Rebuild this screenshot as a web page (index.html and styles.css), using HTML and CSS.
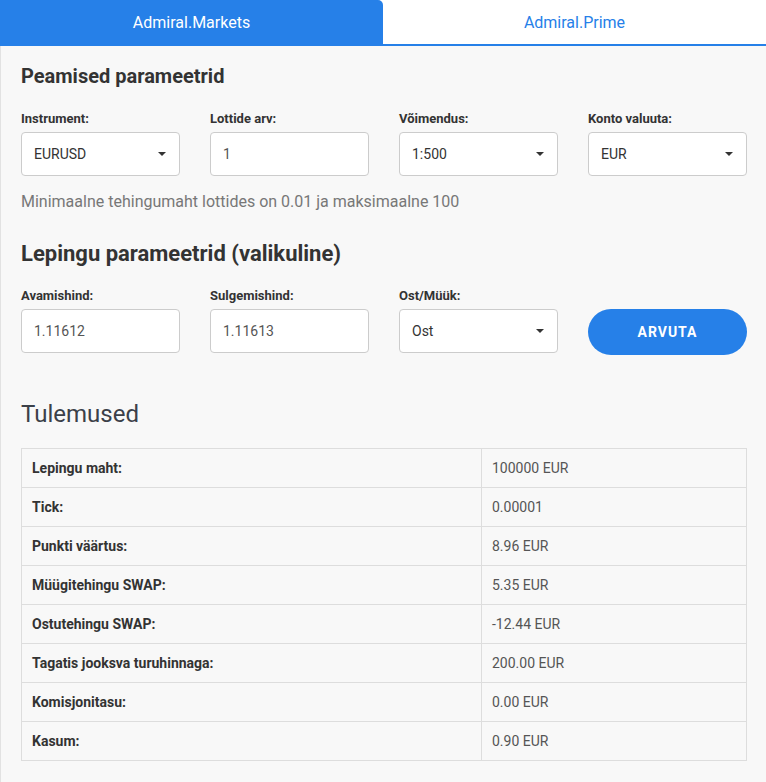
FILE: index.html
```html
<!DOCTYPE html>
<html lang="et">
<head>
    <meta charset="UTF-8">
    <meta name="viewport" content="width=device-width, initial-scale=1.0">
    <title>Kauplemiskalkulaator</title>
    <link rel="stylesheet" href="styles.css">
</head>
<body>
    <div class="tabs">
        <div class="tab active">Admiral.Markets</div>
        <div class="tab">Admiral.Prime</div>
    </div>

    <div class="panel">
        <h2 class="section-title">Peamised parameetrid</h2>
        <div class="row">
            <div class="field">
                <label>Instrument:</label>
                <div class="select-wrap">
                    <select><option>EURUSD</option></select>
                </div>
            </div>
            <div class="field">
                <label>Lottide arv:</label>
                <input type="text" value="1">
            </div>
            <div class="field">
                <label>Võimendus:</label>
                <div class="select-wrap">
                    <select><option>1:500</option></select>
                </div>
            </div>
            <div class="field">
                <label>Konto valuuta:</label>
                <div class="select-wrap">
                    <select><option>EUR</option></select>
                </div>
            </div>
        </div>
        <p class="hint">Minimaalne tehingumaht lottides on 0.01 ja maksimaalne 100</p>

        <h2 class="section-title second">Lepingu parameetrid (valikuline)</h2>
        <div class="row">
            <div class="field">
                <label>Avamishind:</label>
                <input type="text" value="1.11612">
            </div>
            <div class="field">
                <label>Sulgemishind:</label>
                <input type="text" value="1.11613">
            </div>
            <div class="field">
                <label>Ost/Müük:</label>
                <div class="select-wrap">
                    <select><option>Ost</option><option>Müük</option></select>
                </div>
            </div>
            <div class="field button-field">
                <button class="calc-btn">ARVUTA</button>
            </div>
        </div>

        <h3 class="results-title">Tulemused</h3>
        <table class="results">
            <tr><th>Lepingu maht:</th><td>100000 EUR</td></tr>
            <tr><th>Tick:</th><td>0.00001</td></tr>
            <tr><th>Punkti väärtus:</th><td>8.96 EUR</td></tr>
            <tr><th>Müügitehingu SWAP:</th><td>5.35 EUR</td></tr>
            <tr><th>Ostutehingu SWAP:</th><td>-12.44 EUR</td></tr>
            <tr><th>Tagatis jooksva turuhinnaga:</th><td>200.00 EUR</td></tr>
            <tr><th>Komisjonitasu:</th><td>0.00 EUR</td></tr>
            <tr><th>Kasum:</th><td>0.90 EUR</td></tr>
        </table>
    </div>
</body>
</html>
```

FILE: styles.css
```css
body {
    margin: 0;
    font-family: Roboto, Arial, sans-serif;
    color: #333;
    background: #fff;
}

.tabs {
    display: flex;
    height: 44px;
    border-bottom: 2px solid #2680e8;
}

.tab {
    flex: 1;
    display: flex;
    align-items: center;
    justify-content: center;
    font-size: 16px;
    color: #2680e8;
}

.tab.active {
    flex: 0 0 383px;
    background-color: #2680e8;
    color: #fff;
    border-top-right-radius: 5px;
}

.panel {
    background-color: #f8f8f8;
    border-left: 1px solid #e2e2e2;
    padding: 18px 19px 22px 20px;
}

.section-title {
    margin: 0;
    font-size: 20px;
    line-height: 24px;
    font-weight: 700;
    color: #333;
}

.section-title.second {
    margin-top: 29px;
    font-size: 22px;
    line-height: 26px;
}

.row {
    display: grid;
    grid-template-columns: repeat(4, 159px);
    gap: 30px;
    margin-top: 23px;
}

.section-title.second + .row {
    margin-top: 21px;
}

.field {
    display: flex;
    flex-direction: column;
}

.field label {
    font-size: 13px;
    line-height: 16px;
    font-weight: 700;
    color: #333;
    margin-bottom: 5px;
}

.field input,
.field select {
    box-sizing: border-box;
    width: 100%;
    height: 44px;
    padding: 0 12px;
    font-family: inherit;
    font-size: 14px;
    background: #fff;
    border: 1px solid #ccc;
    border-radius: 4px;
    outline: none;
}

.field input {
    color: #555;
}

.field select {
    color: #333;
    appearance: none;
    -webkit-appearance: none;
}

.select-wrap {
    position: relative;
}

.select-wrap::after {
    content: "";
    position: absolute;
    right: 14px;
    top: 20px;
    border-left: 4px solid transparent;
    border-right: 4px solid transparent;
    border-top: 4px solid #333;
    pointer-events: none;
}

.button-field {
    padding-top: 21px;
}

.calc-btn {
    height: 46px;
    border: none;
    border-radius: 23px;
    background-color: #2680e8;
    color: #fff;
    font-family: inherit;
    font-size: 14px;
    font-weight: 700;
    letter-spacing: 1px;
    cursor: pointer;
}

.hint {
    margin: 16px 0 0;
    font-size: 16px;
    line-height: 20px;
    color: #777;
}

.results-title {
    margin: 45px 0 0;
    font-size: 24px;
    line-height: 28px;
    font-weight: 400;
    color: #3b4049;
}

.results {
    width: 100%;
    margin-top: 20px;
    border-collapse: collapse;
    font-size: 14px;
}

.results th,
.results td {
    height: 38px;
    padding: 0 10px;
    text-align: left;
    border: 1px solid #ddd;
}

.results th {
    width: 439px;
    font-weight: 700;
    color: #333;
}

.results td {
    color: #555;
}
```
